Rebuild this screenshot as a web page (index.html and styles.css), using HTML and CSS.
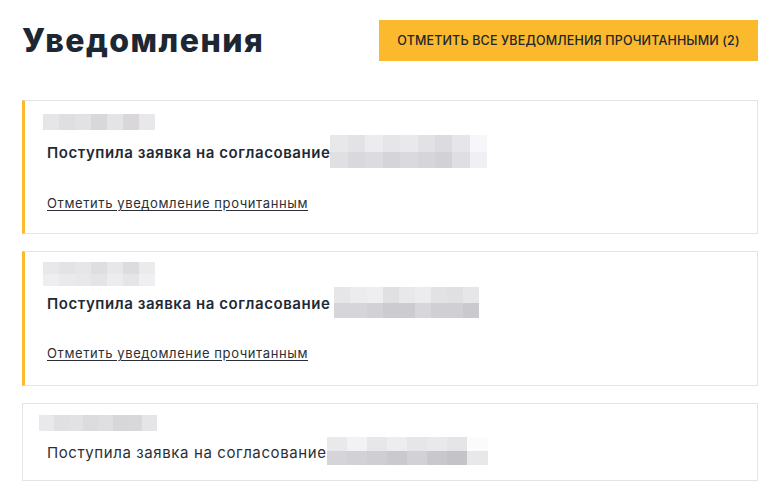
FILE: index.html
```html
<!DOCTYPE html>
<html lang="ru">
<head>
<meta charset="utf-8">
<title>Уведомления</title>
<link rel="stylesheet" href="styles.css">
</head>
<body>
<div class="page">
  <header class="head">
    <h1 class="title">Уведомления</h1>
    <button class="btn-all">ОТМЕТИТЬ ВСЕ УВЕДОМЛЕНИЯ ПРОЧИТАННЫМИ (2)</button>
  </header>
  <div class="list">
    <div class="card unread c1">
      <div class="blur date">
        <i style="background:#e6e6e8"></i><i style="background:#dfdfe1"></i><i style="background:#e2e2e4"></i><i style="background:#d8d8da"></i><i style="background:#e4e4e6"></i><i style="background:#d9d7d9"></i><i style="background:#e8e8ea"></i>
      </div>
      <div class="row">
        <span class="text">Поступила заявка на согласование</span>
        <div class="blur obj o1">
          <div class="brow"><i style="background:#e8e8ea"></i><i style="background:#e3e3e6"></i><i style="background:#ececef"></i><i style="background:#e6e6e9"></i><i style="background:#e9e9ec"></i><i style="background:#e2e2e5"></i><i style="background:#dcdce0"></i><i style="background:#e6e6ea"></i><i style="background:#f7f7fa"></i></div>
          <div class="brow"><i style="background:#e0e0e3"></i><i style="background:#d9d9dd"></i><i style="background:#dcdce0"></i><i style="background:#d5d5d9"></i><i style="background:#dadade"></i><i style="background:#d6d6da"></i><i style="background:#d1d1d6"></i><i style="background:#dfdfe3"></i><i style="background:#f0f0f4"></i></div>
        </div>
      </div>
      <a class="link" href="#">Отметить уведомление прочитанным</a>
    </div>
    <div class="card unread c2">
      <div class="blur date tall">
        <div class="brow"><i style="background:#e8e8ea"></i><i style="background:#e3e3e5"></i><i style="background:#e6e6e8"></i><i style="background:#dedee0"></i><i style="background:#e7e7e9"></i><i style="background:#dcdcde"></i><i style="background:#ebebed"></i></div>
        <div class="brow"><i style="background:#eeeef0"></i><i style="background:#eaeaec"></i><i style="background:#e8e8ea"></i><i style="background:#e4e4e6"></i><i style="background:#ececee"></i><i style="background:#e5e5e7"></i><i style="background:#efeff1"></i></div>
      </div>
      <div class="row">
        <span class="text">Поступила заявка на согласование</span>
        <div class="blur obj o2">
          <div class="brow"><i style="background:#e6e6e9"></i><i style="background:#ececef"></i><i style="background:#eeeef0"></i><i style="background:#e0e0e3"></i><i style="background:#e8e8eb"></i><i style="background:#ececef"></i><i style="background:#e2e2e5"></i><i style="background:#e0e0e3"></i><i style="background:#e6e6e9"></i></div>
          <div class="brow"><i style="background:#d6d6da"></i><i style="background:#d6d6da"></i><i style="background:#d2d2d6"></i><i style="background:#cbcbd0"></i><i style="background:#cbcbd0"></i><i style="background:#d7d7db"></i><i style="background:#cfcfd4"></i><i style="background:#cfcfd4"></i><i style="background:#c9c9ce"></i></div>
        </div>
      </div>
      <a class="link" href="#">Отметить уведомление прочитанным</a>
    </div>
    <div class="card read">
      <div class="blur date d3">
        <i style="background:#e9e9eb"></i><i style="background:#e0e0e2"></i><i style="background:#e2e2e4"></i><i style="background:#dcdcde"></i><i style="background:#dfdfe1"></i><i style="background:#d7d7d9"></i><i style="background:#d8d8da"></i><i style="background:#e5e5e7"></i>
      </div>
      <div class="row">
        <span class="text plain">Поступила заявка на согласование</span>
        <div class="blur obj o3">
          <div class="brow"><i style="background:#e9e9eb"></i><i style="background:#f2f2f4"></i><i style="background:#e7e7ea"></i><i style="background:#ededef"></i><i style="background:#e6e6e9"></i><i style="background:#e9e9ec"></i><i style="background:#e5e5e8"></i><i style="background:#fbfbfc"></i></div>
          <div class="brow"><i style="background:#d5d5d9"></i><i style="background:#d2d2d6"></i><i style="background:#cfcfd3"></i><i style="background:#cacace"></i><i style="background:#d2d2d6"></i><i style="background:#c8c8cd"></i><i style="background:#c3c3c8"></i><i style="background:#e8e8eb"></i></div>
        </div>
      </div>
    </div>
  </div>
</div>
</body>
</html>
```

FILE: styles.css
```css
* { box-sizing: border-box; }
html, body { margin: 0; background: #ffffff; }
body {
  font-family: "Inter", "Open Sans", "Liberation Sans", sans-serif;
  color: #1d2834;
}
.page {
  padding: 20px 13px 0 22px;
}
.head {
  display: flex;
  justify-content: space-between;
  align-items: flex-start;
  height: 80px;
}
.title {
  margin: 1px 0 0 0;
  font-size: 32px;
  font-weight: 800;
  letter-spacing: 1.45px;
  line-height: 40px;
  color: #1c2733;
}
.btn-all {
  width: 379px;
  height: 41px;
  border: none;
  background: #fbb92d;
  font-family: inherit;
  font-size: 12.5px;
  font-weight: 500;
  letter-spacing: 0.15px;
  color: #22262b;
  padding: 0;
  cursor: pointer;
}
.list {
  display: flex;
  flex-direction: column;
  gap: 17px;
}
.card {
  border: 1px solid #e4e4e4;
  background: #fff;
  padding: 13px 20px 0 18px;
}
.card.unread {
  border-left: 3px solid #fbb92d;
}
.c1 { height: 134px; }
.c2 { height: 135px; padding-top: 10px; }
.read { height: 78px; padding-left: 16px; padding-top: 11px; }
.blur { display: flex; }
.blur i { flex: 1; display: block; }
.date { width: 112px; height: 16px; }
.date.tall { height: 24px; flex-direction: column; width: 112px; }
.d3 { width: 118px; }
.brow { display: flex; flex: 1; }
.obj { flex-direction: column; height: 33px; }
.o1 { width: 157px; }
.o2 { width: 145px; height: 31px; margin-left: 4px; }
.o3 { width: 161px; height: 28px; }
.row {
  display: flex;
  align-items: center;
  margin-top: 5px;
  padding-left: 4px;
}
.c2 .row { margin-top: 1px; }
.read .row { margin-top: 6px; padding-left: 8px; }
.text {
  font-size: 15px;
  font-weight: 600;
  letter-spacing: 0.56px;
  color: #1f2a36;
  padding-top: 2px;
}
.text.plain {
  font-weight: 400;
  letter-spacing: 0.6px;
  color: #2b2f35;
}
.link {
  display: inline-block;
  margin-top: 27px;
  margin-left: 4px;
  font-size: 13px;
  letter-spacing: 0.6px;
  color: #2a2f36;
  text-decoration: underline;
  text-underline-offset: 2px;
}
```
